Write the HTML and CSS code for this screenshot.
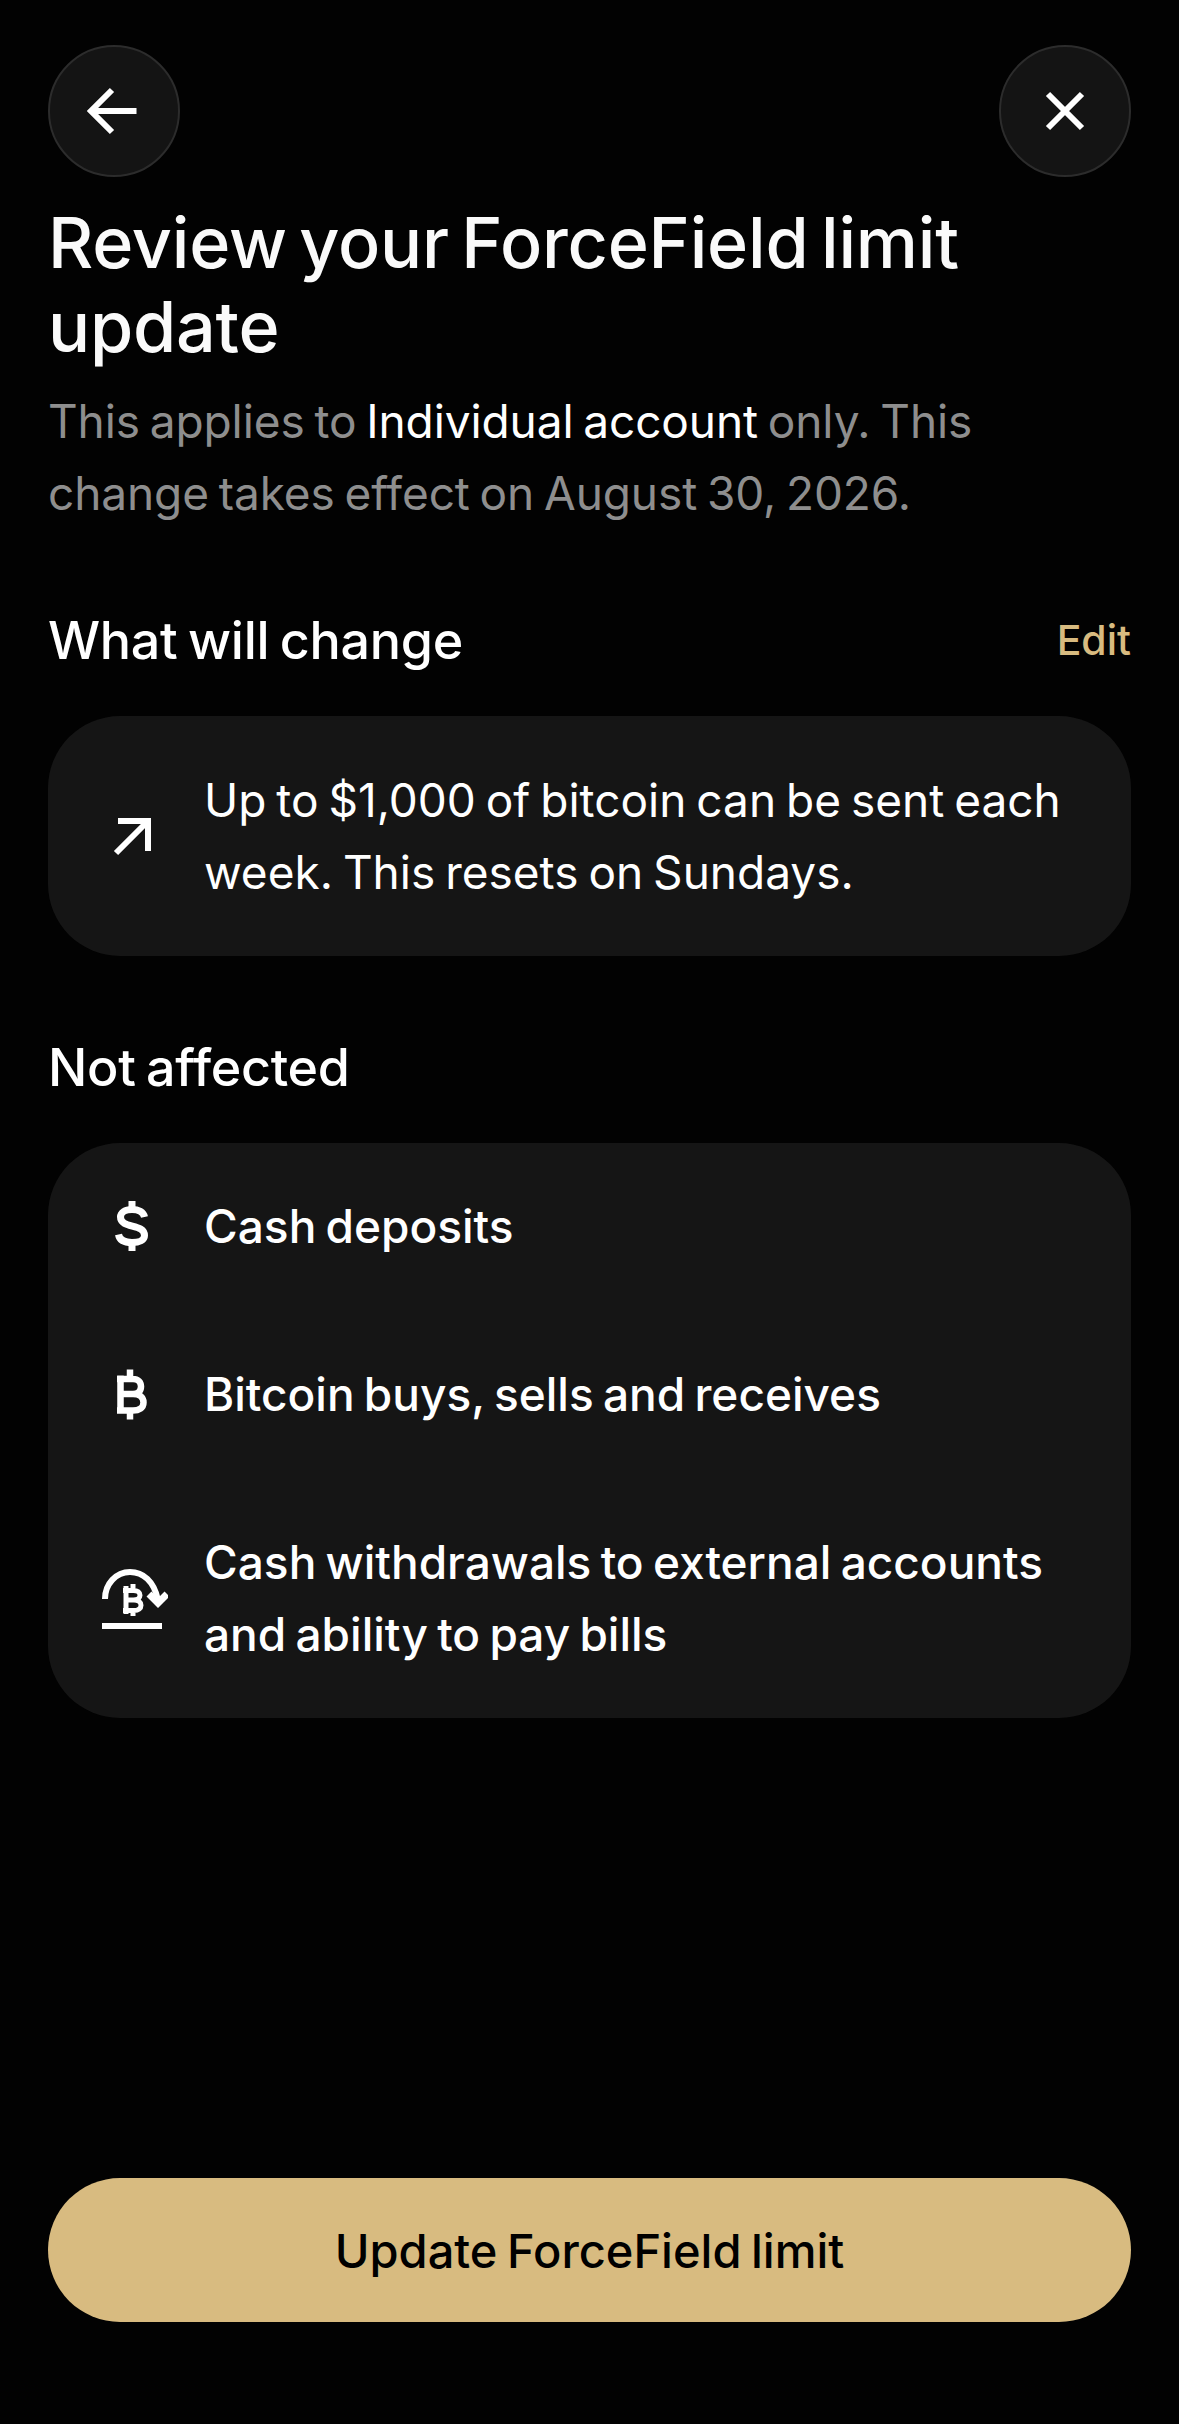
FILE: index.html
```html
<!DOCTYPE html>
<html lang="en">
<head>
    <meta charset="UTF-8">
    <meta name="viewport" content="width=device-width, initial-scale=1.0">
    <title>Review limit update</title>
    <link rel="stylesheet" href="styles.css">
</head>
<body>
    <div class="screen">
        <div class="top-bar">
            <button class="round-button" aria-label="Back">
                <svg width="60" height="60" viewBox="0 0 60 60" fill="none" stroke="#fff" stroke-width="6">
                    <path d="M52.500 30H8M28 9L7 30l21 21"/>
                </svg>
            </button>
            <button class="round-button" aria-label="Close">
                <svg width="60" height="60" viewBox="0 0 60 60" fill="none" stroke="#fff" stroke-width="6">
                    <path d="M13 13l34 34M47 13L13 47"/>
                </svg>
            </button>
        </div>

        <h1 class="title">Review your ForceField limit update</h1>
        <p class="subtitle">This applies to <span class="highlight">Individual account</span> only. This change takes effect on August 30, 2026.</p>

        <div class="section-head">
            <h2>What will change</h2>
            <a href="#" class="edit-link">Edit</a>
        </div>
        <div class="card">
            <div class="row">
                <div class="row-icon">
                    <svg width="60" height="60" viewBox="0 0 60 60" fill="none" stroke="#fff" stroke-width="6">
                        <path d="M16 15h30v30M14 47l31-31"/>
                    </svg>
                </div>
                <div class="row-text">Up to $1,000 of bitcoin can be sent each week. This resets on Sundays.</div>
            </div>
        </div>

        <div class="section-head">
            <h2>Not affected</h2>
        </div>
        <div class="card card-list">
            <div class="row">
                <div class="row-icon">
                    <svg width="60" height="60" viewBox="0 0 60 60" fill="none" stroke="#fff" stroke-width="7">
                        <path d="M42.500 21C41.500 16 36.500 13.500 30 13.500 23 13.500 18.500 16.500 18.500 21 18.500 33 42.500 27 42.500 39.500 42.500 44 37.500 46.500 30 46.500 22.500 46.500 17.500 44 16.500 38.500"/>
                        <path d="M30 5v9M30 46v9"/>
                    </svg>
                </div>
                <div class="row-text strong">Cash deposits</div>
            </div>
            <div class="row">
                <div class="row-icon">
                    <svg width="60" height="60" viewBox="0 0 60 60" fill="none" stroke="#fff" stroke-width="6.500">
                        <path d="M18.500 11.500v38M15 15h16c5 0 8 3 8 7.500S36 30 31 30H18.500M31 30c6 0 10.500 3 10.500 8.500S37 46.500 31 46.500H15M28 5.500v9M28 46v9.500"/>
                    </svg>
                </div>
                <div class="row-text strong">Bitcoin buys, sells and receives</div>
            </div>
            <div class="row">
                <div class="row-icon">
                    <svg width="72" height="66" viewBox="0 0 72 66" fill="none" stroke="#fff" stroke-width="6">
                        <path d="M9 34C9 19 20 7 34 7c13 0 24 9 28 28"/>
                        <path stroke-width="7" d="M53 29l9 9 9-9"/>
                        <path d="M6 61h60"/>
                        <path stroke-width="5" d="M30 21v28M27 25.500h10.500c4 0 6.500 2 6.500 4.800s-2.500 4.700-6.500 4.700H30M38 35c4.500 0 7 2 7 5.200s-2.500 5.300-7 5.300H27M37 19v6M37 45v6"/>
                    </svg>
                </div>
                <div class="row-text strong">Cash withdrawals to external accounts and ability to pay bills</div>
            </div>
        </div>

        <button class="primary-button">Update ForceField limit</button>
    </div>
</body>
</html>
```

FILE: styles.css
```css
* {
    margin: 0;
    padding: 0;
    box-sizing: border-box;
}

body {
    background-color: #020202;
    color: #fff;
    font-family: Inter, "Noto Sans", sans-serif;
}

.screen {
    height: 2424px;
    padding: 45px 48px 102px;
    display: flex;
    flex-direction: column;
    overflow: hidden;
}

.top-bar {
    display: flex;
    justify-content: space-between;
}

.round-button {
    width: 132px;
    height: 132px;
    border-radius: 50%;
    background-color: #141414;
    border: 2px solid #2c2c2c;
    display: flex;
    align-items: center;
    justify-content: center;
}

.title {
    font-size: 70px;
    font-weight: 500;
    line-height: 84px;
    letter-spacing: -0.2px;
    word-spacing: -6px;
    color: #fafafa;
    margin-top: 24px;
}

.subtitle {
    font-size: 46px;
    line-height: 72px;
    letter-spacing: -0.1px;
    word-spacing: -3px;
    color: #8e8e8e;
    margin-top: 16px;
}

.highlight {
    color: #fff;
}

.section-head {
    display: flex;
    justify-content: space-between;
    align-items: center;
    margin-top: 81px;
    height: 60px;
}

.section-head h2 {
    font-size: 52px;
    font-weight: 500;
    letter-spacing: -0.3px;
    word-spacing: -3px;
}

.edit-link {
    font-size: 41px;
    font-weight: 500;
    color: #d8bb80;
    text-decoration: none;
}

.card {
    background-color: #151515;
    border-radius: 72px;
    padding: 48px;
    margin-top: 46px;
}

.card-list {
    padding: 47px 48px 48px;
    display: flex;
    flex-direction: column;
    gap: 96px;
}

.row {
    display: flex;
    align-items: center;
    gap: 36px;
}

.row-icon {
    flex: 0 0 72px;
    display: flex;
    justify-content: center;
}

.row-text {
    font-size: 46px;
    line-height: 72px;
    word-spacing: -3px;
}

.strong {
    font-weight: 500;
}

.primary-button {
    margin-top: auto;
    height: 144px;
    border: none;
    border-radius: 72px;
    background-color: #d8bb80;
    color: #000;
    font-family: inherit;
    font-size: 47px;
    font-weight: 500;
    word-spacing: -3px;
}
```
